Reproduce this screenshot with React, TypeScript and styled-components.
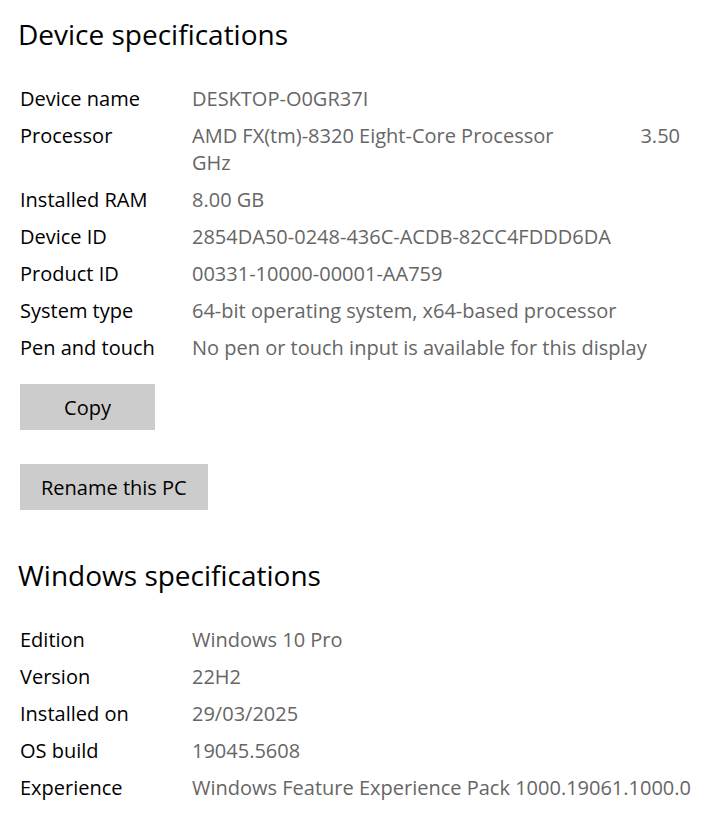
import React from 'react';
import styled, { createGlobalStyle } from 'styled-components';

const GlobalStyle = createGlobalStyle`
  html, body {
    margin: 0;
    padding: 0;
    background: #ffffff;
  }
  body {
    font-family: 'Open Sans', 'Noto Sans', sans-serif;
    color: #000000;
  }
`;

const Page = styled.div`
  padding: 14px 20px 0 20px;
`;

const Heading = styled.h1<{ $top?: number }>`
  margin: ${(p) => p.$top ?? 0}px 0 0 -2px;
  font-size: 28px;
  font-weight: 400;
  line-height: 40px;
  color: #000;
`;

const SpecGrid = styled.div`
  display: grid;
  grid-template-columns: 172px 1fr;
  row-gap: 10px;
  margin-top: 31px;
  font-size: 20px;
  line-height: 27px;
`;

const Label = styled.div`
  color: #000;
  white-space: nowrap;
`;

const Value = styled.div`
  color: #666666;
  white-space: nowrap;
`;

const SplitLine = styled.div`
  display: flex;
  justify-content: space-between;
  width: 488px;
`;

const Buttons = styled.div`
  display: flex;
  flex-direction: column;
  align-items: flex-start;
  gap: 34px;
  margin-top: 23px;
`;

const Button = styled.button`
  height: 46px;
  padding: 0 21px;
  border: none;
  border-radius: 0;
  background: #cccccc;
  color: #000;
  font-family: inherit;
  font-size: 20px;
  cursor: pointer;
  &:first-child {
    width: 135px;
  }
`;

const device: [string, React.ReactNode][] = [
  ['Device name', 'DESKTOP-O0GR37I'],
  [
    'Processor',
    <>
      <SplitLine>
        <span>AMD FX(tm)-8320 Eight-Core Processor</span>
        <span>3.50</span>
      </SplitLine>
      GHz
    </>,
  ],
  ['Installed RAM', '8.00 GB'],
  ['Device ID', '2854DA50-0248-436C-ACDB-82CC4FDDD6DA'],
  ['Product ID', '00331-10000-00001-AA759'],
  ['System type', '64-bit operating system, x64-based processor'],
  ['Pen and touch', 'No pen or touch input is available for this display'],
];

const windows: [string, string][] = [
  ['Edition', 'Windows 10 Pro'],
  ['Version', '22H2'],
  ['Installed on', '29/03/2025'],
  ['OS build', '19045.5608'],
  ['Experience', 'Windows Feature Experience Pack 1000.19061.1000.0'],
];

const Specs = ({ rows }: { rows: [string, React.ReactNode][] }) => (
  <SpecGrid>
    {rows.map(([k, v]) => (
      <React.Fragment key={k}>
        <Label>{k}</Label>
        <Value>{v}</Value>
      </React.Fragment>
    ))}
  </SpecGrid>
);

export default function App() {
  return (
    <>
      <GlobalStyle />
      <Page>
        <Heading>Device specifications</Heading>
        <Specs rows={device} />
        <Buttons>
          <Button>Copy</Button>
          <Button>Rename this PC</Button>
        </Buttons>
        <Heading $top={45}>Windows specifications</Heading>
        <Specs rows={windows} />
      </Page>
    </>
  );
}
